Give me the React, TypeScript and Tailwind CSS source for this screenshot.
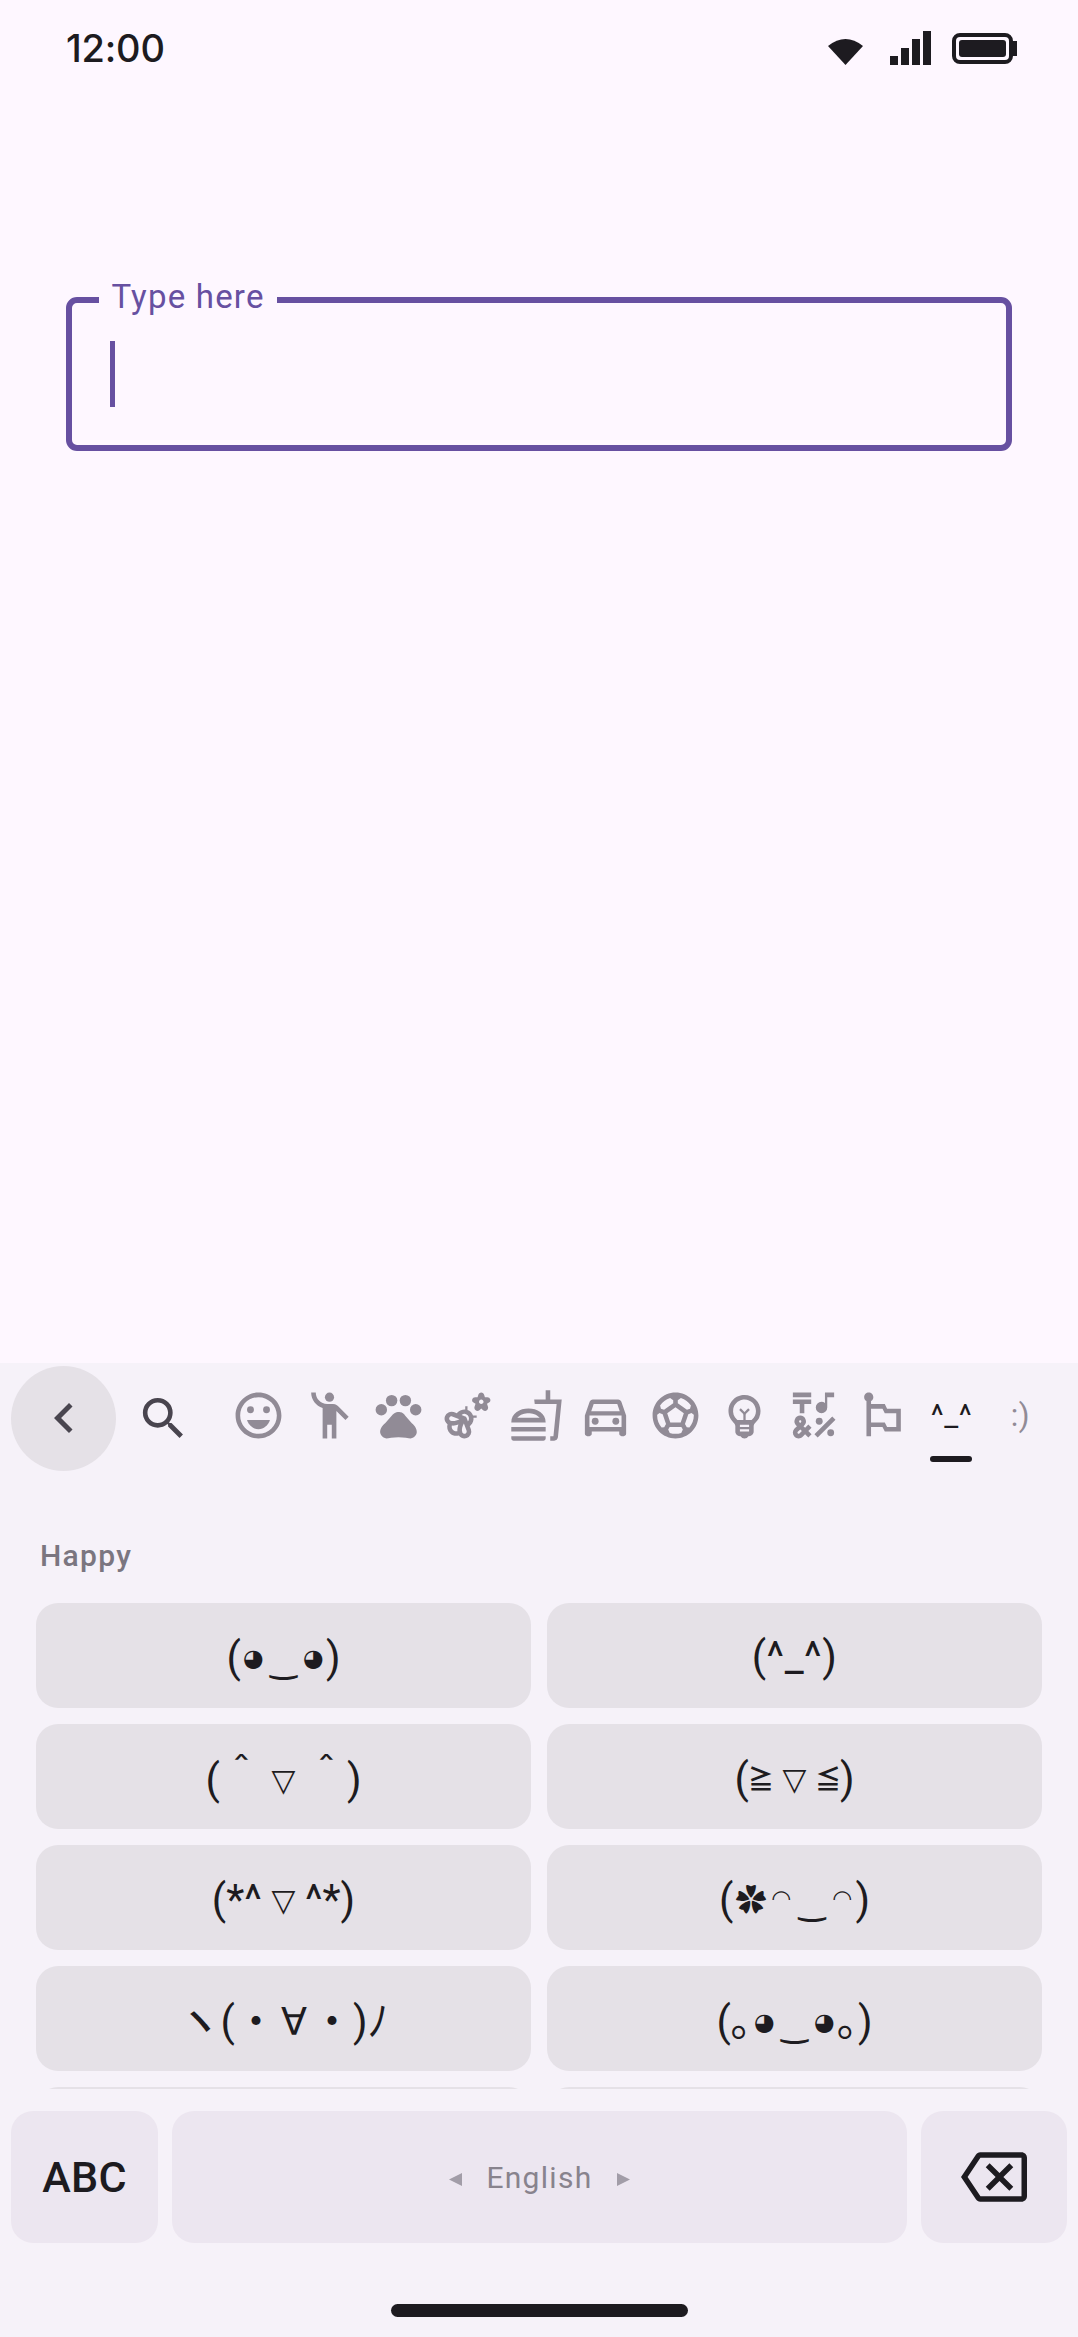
import type { ReactNode } from "react"

// Icons
import {
  MdChevronLeft,
  MdSearch,
  MdOutlineEmojiEmotions,
  MdEmojiPeople,
  MdPets,
  MdOutlineEmojiNature,
  MdOutlineFastfood,
  MdOutlineDirectionsCar,
  MdOutlineSportsSoccer,
  MdOutlineEmojiObjects,
  MdOutlineEmojiSymbols,
  MdOutlineEmojiFlags,
  MdOutlineBackspace,
} from "react-icons/md"

const categories = [
  MdOutlineEmojiEmotions,
  MdEmojiPeople,
  MdPets,
  MdOutlineEmojiNature,
  MdOutlineFastfood,
  MdOutlineDirectionsCar,
  MdOutlineSportsSoccer,
  MdOutlineEmojiObjects,
  MdOutlineEmojiSymbols,
  MdOutlineEmojiFlags,
]

// Symbols that are drawn smaller than the brackets around them
const symbols: Record<string, string> = {
  "◕": "w-[25px] text-[24px] font-['DejaVu_Sans']",
  "‿": "w-[35px] pt-[6px] text-[32px] font-bold",
  "▽": "w-[43px] text-[31px] font-['DejaVu_Sans']",
  "≧": "w-[24px] pt-[2px] text-[26px] font-bold",
  "≦": "w-[24px] pt-[2px] text-[26px] font-bold",
  "✿": "w-[35px] pt-[2px] text-[31px]",
  "◠": "w-[26px] pb-[4px] text-[23px] font-['DejaVu_Sans']",
  "∀": "w-[34px] text-[38px] font-['DejaVu_Sans']",
  "・": "w-[42px]",
  "ヽ": "w-[42px] font-medium",
  "＾": "w-[42px]",
}

const kaomoji = [
  { face: "(◕‿◕)", shift: "pt-[5px]" },
  { face: "(^_^)", shift: "pt-[2px] tracking-[0.5px]" },
  { face: "(＾▽＾)", shift: "pt-[6px]" },
  { face: "(≧▽≦)", shift: "pt-[5px]" },
  { face: "(*^▽^*)", shift: "pt-[5px]" },
  { face: "(✿◠‿◠)", shift: "pt-[5px]" },
  { face: "ヽ(・∀・)ﾉ", shift: "pt-[6px]" },
  { face: "(｡◕‿◕｡)", shift: "pt-[6px]" },
]

function StatusBar() {
  return (
    <div className="flex h-[96px] items-center justify-between pl-[66px] pr-[61px]">
      <span className="font-['Inter'] text-[38px] leading-none font-medium tracking-[-0.2px] text-[#1d1b20]">12:00</span>
      <svg width="189" height="34" viewBox="828 31 189 34" fill="#1d1b20">
        <path d="M828 46Q845.500 32 863 46L845.500 65Z" />
        <path d="M890 56h8v9h-8zM901 48h8v17h-8zM912 39h8v26h-8zM923 31h8v34h-8z" />
        <rect x="954" y="35" width="57" height="27" rx="6" fill="none" stroke="#1d1b20" strokeWidth="4" />
        <rect x="959" y="40" width="47" height="17" rx="3" />
        <path d="M1012 41h5v15h-5z" />
      </svg>
    </div>
  )
}

function TextField() {
  return (
    <div className="relative mx-[66px] mt-[201px] h-[154px] rounded-[11px] border-6 border-[#6750a1]">
      <span className="absolute -top-[26px] left-[27px] flex h-[40px] w-[178px] items-center justify-center bg-[#fef7ff] text-[33px] tracking-[1.2px] text-[#6750a1]">
        Type here
      </span>
      <div className="mt-[38px] ml-[38px] h-[66px] w-[5px] bg-[#6750a1]" />
    </div>
  )
}

function CategoryBar() {
  return (
    <div className="flex h-[111px] items-start pt-[3px] pl-[11px]">
      <div className="flex size-[105px] items-center justify-center rounded-full bg-[#e5e1e7] pb-px">
        <MdChevronLeft className="size-[60px] text-[#49454f]" />
      </div>
      <MdSearch className="mt-[25px] ml-[20px] size-[55px] text-[#49454f]" />
      <div className="mt-[22px] ml-[31.5px] flex text-[#918b96]">
        {categories.map((Icon, i) => (
          <div key={i} className="flex w-[69.1px] justify-center first:w-[72.5px]">
            <Icon className="size-[55px]" />
          </div>
        ))}
        <div className="flex w-[69.1px] flex-col items-center">
          <span className="h-[68px] text-[31px] leading-[55px] tracking-[0.5px] text-[#1d1b20]">^_^</span>
          <span className="h-[6px] w-[42px] rounded-full bg-[#1d1b20]" />
        </div>
        <span className="w-[69px] text-center text-[31px] leading-[55px] tracking-[0.5px]">:)</span>
      </div>
    </div>
  )
}

function Face({ face, shift }: { face: string; shift: string }) {
  return (
    <div
      className={`flex h-[105px] items-center justify-center rounded-[22px] bg-[#e5e1e7] text-[42px] leading-[48px] text-[#1d1b20] ${shift}`}
    >
      {face.split("").map((char, i) => (
        <span key={i} className={`flex justify-center ${symbols[char] ?? ""}`}>
          {char}
        </span>
      ))}
    </div>
  )
}

function Key({ className, children }: { className: string; children: ReactNode }) {
  return (
    <div className={`flex h-[132px] items-center justify-center rounded-[22px] bg-[#ece6f0] ${className}`}>
      {children}
    </div>
  )
}

function Keyboard() {
  return (
    <div className="flex flex-1 flex-col bg-[#f6f2f9]">
      <CategoryBar />
      <div className="h-[615px] overflow-hidden px-[36px]">
        <h2 className="mt-[62px] ml-[4px] h-[67px] text-[30px] leading-[40px] font-medium tracking-[1.3px] text-[#7b7680]">
          Happy
        </h2>
        <div className="grid grid-cols-2 gap-[16px]">
          {kaomoji.map((item) => (
            <Face key={item.face} {...item} />
          ))}
          <div className="h-[105px] rounded-[22px] bg-[#e5e1e7]" />
          <div className="h-[105px] rounded-[22px] bg-[#e5e1e7]" />
        </div>
      </div>
      <div className="mt-[22px] flex px-[11px]">
        <Key className="mr-[14px] w-[147px] text-[43px] font-medium tracking-[0.3px] text-[#1d1b20]">ABC</Key>
        <Key className="mr-[14px] flex-1 gap-[24px] text-[30px] tracking-[1.3px] text-[#88838d]">
          <svg className="mt-[4px] size-[13px]" viewBox="0 0 13 13" fill="#a29da8">
            <path d="M13 0v13L0 6.500z" />
          </svg>
          English
          <svg className="mt-[4px] size-[13px]" viewBox="0 0 13 13" fill="#a29da8">
            <path d="M0 0v13l13-6.500z" />
          </svg>
        </Key>
        <Key className="w-[146px]">
          <MdOutlineBackspace className="size-[66px] text-[#1d1b20]" />
        </Key>
      </div>
      <div className="mx-auto mt-[61px] h-[13px] w-[297px] rounded-full bg-[#1d1b20]" />
    </div>
  )
}

export default function App() {
  return (
    <div className="flex h-[2337px] w-[1078px] flex-col overflow-hidden bg-[#fef7ff] font-['Roboto','Noto_Sans_CJK_JP','DejaVu_Sans',sans-serif]">
      <div className="h-[1363px]">
        <StatusBar />
        <TextField />
      </div>
      <Keyboard />
    </div>
  )
}
